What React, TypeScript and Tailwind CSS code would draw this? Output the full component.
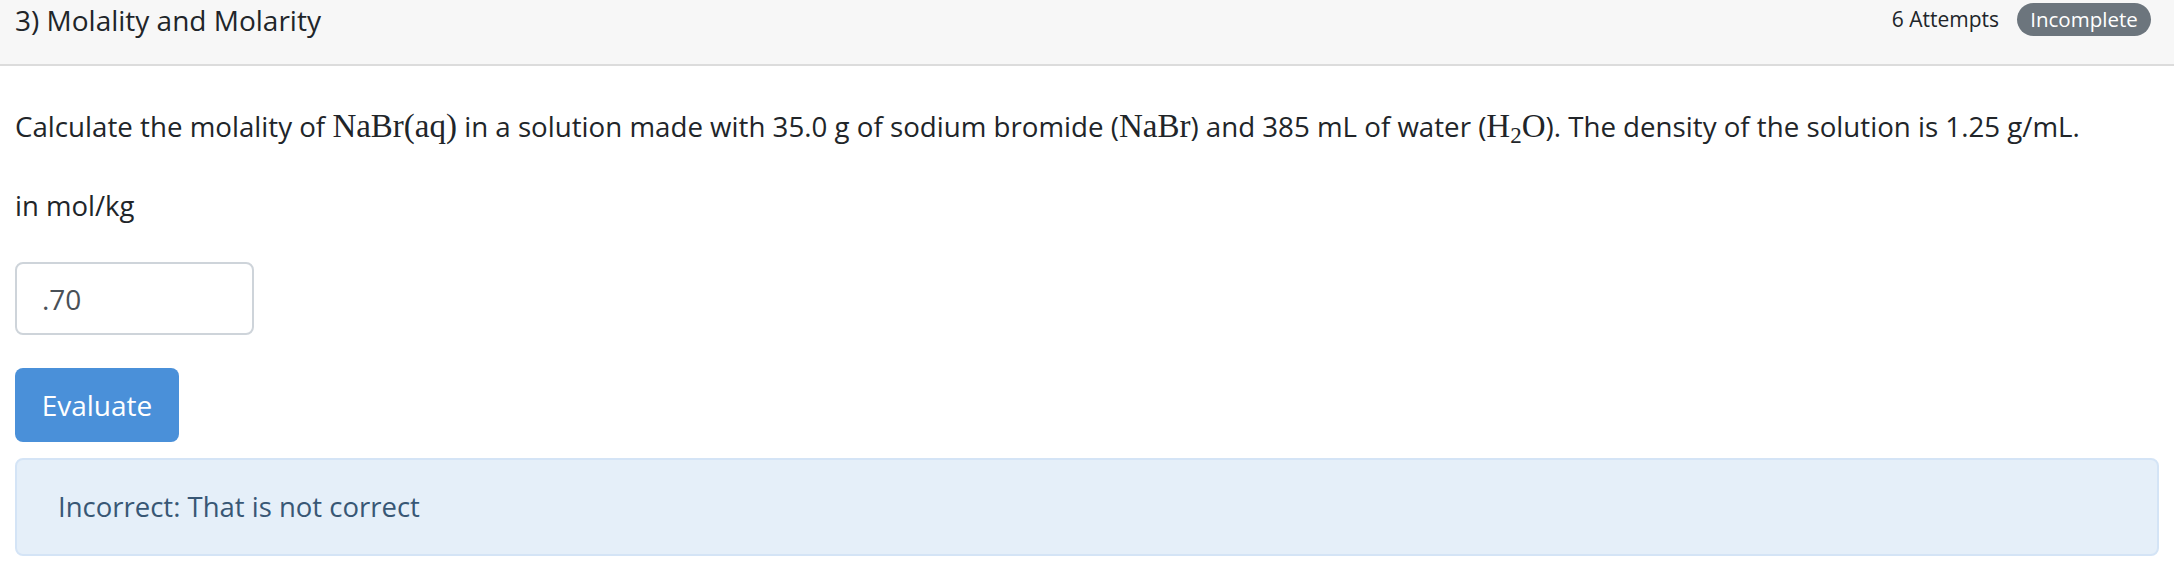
export default function App() {
  const serif = "font-['Liberation_Serif',serif] text-[33px]";
  return (
    <div className="w-full bg-white font-['Open_Sans',sans-serif] text-[#212529]">
      <div className="flex h-[66px] items-start justify-between border-b-2 border-[#dcdcdc] bg-[#f7f7f7] pl-[15px] pr-[23px]">
        <h1 className="pt-[1px] text-[28px] leading-[38px]">3) Molality and Molarity</h1>
        <div className="flex items-center gap-[18px] pt-[3px]">
          <span className="text-[21px] leading-[33px]">6 Attempts</span>
          <span className="flex h-[33px] w-[134px] items-center justify-center rounded-full bg-[#6c757d] text-[20.5px] text-white">
            Incomplete
          </span>
        </div>
      </div>
      <div className="flex flex-col px-[15px] pt-[41px]">
        <p className="text-[27.7px] leading-[39px]">
          Calculate the molality of <span className={serif}>NaBr(aq)</span> in a solution made with 35.0 g of sodium
          bromide (<span className={serif}>NaBr</span>) and 385 mL of water (
          <span className={serif}>
            H<sub className="text-[23px]">2</sub>O
          </span>
          ). The density of the solution is 1.25 g/mL.
        </p>
        <p className="mt-[40px] text-[27.5px] leading-[39px]">in mol/kg</p>
        <div className="mt-[37px] flex h-[73px] w-[239px] items-center rounded-[8px] border-2 border-[#ced4da] pl-[25px] text-[28px] text-[#495057]">
          .70
        </div>
        <button className="mt-[33px] flex h-[74px] w-[164px] items-center justify-center rounded-[8px] bg-[#4a90d9] text-[28px] text-white">
          Evaluate
        </button>
        <div className="mt-[16px] flex h-[98px] items-center rounded-[8px] border-2 border-[#d4e4f6] bg-[#e5eff9] pl-[41px] text-[27.5px] text-[#385775]">
          Incorrect: That is not correct
        </div>
      </div>
    </div>
  );
}
